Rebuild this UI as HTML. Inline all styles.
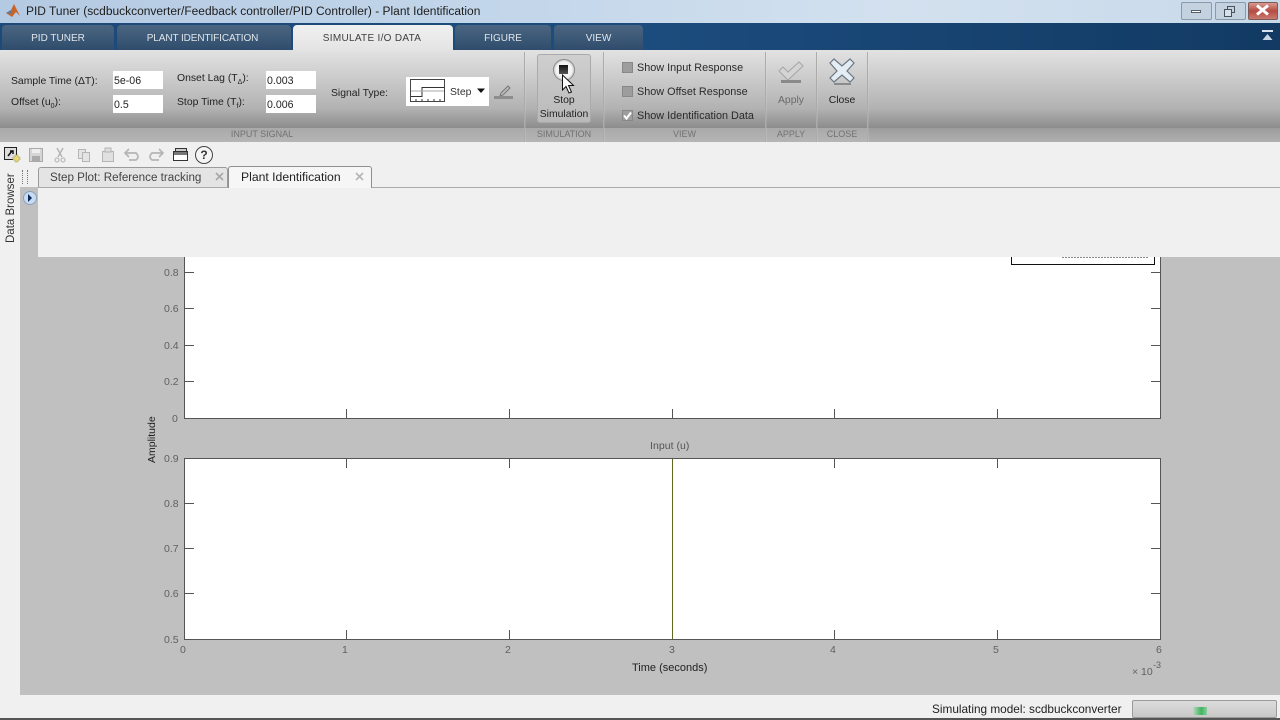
<!DOCTYPE html>
<html><head><meta charset="utf-8">
<style>
html,body{margin:0;padding:0;width:1280px;height:720px;overflow:hidden;background:#f0f0f0;font-family:"Liberation Sans",sans-serif;}
.a{position:absolute;white-space:nowrap;}
#title{left:0;top:0;width:1280px;height:23px;background:linear-gradient(to right,#b4cae2,#c3d6ea 40%,#d3e1ef 70%,#c8d9ea);}
#tabbar{left:0;top:23px;width:1280px;height:27px;background:linear-gradient(to right,#1d4a78,#1c4c7e 50%,#123a63);}
.tab{position:absolute;top:2px;height:25px;background:linear-gradient(#4a6682,#2f4c6c);border-radius:4px 4px 0 0;color:#dfe5ea;font-size:10px;line-height:28px;text-align:center;}
#ribbon{left:0;top:50px;width:1280px;height:78px;background:linear-gradient(#e2e2e2,#cccccc 35%,#b2b2b2 75%,#8c8c8c);}
#strip{left:0;top:128px;width:867px;height:14px;background:linear-gradient(#a9a9a9,#b5b5b5);}
#strip2{left:867px;top:128px;width:413px;height:14px;background:linear-gradient(#9c9c9c,#b0b0b0);}
.lbl{position:absolute;top:128px;height:14px;line-height:13px;font-size:9px;color:#727272;text-align:center;}
.sep{position:absolute;top:52px;width:1px;height:90px;background:#ababab;box-shadow:1px 0 0 rgba(255,255,255,.12);}
.t{position:absolute;font-size:10.4px;color:#222;white-space:nowrap;}
.inp{position:absolute;background:#fff;height:18px;font-size:10.6px;color:#222;line-height:20px;padding-left:1px;width:49px;}
sub{font-size:7px;line-height:0;}
.cb{position:absolute;left:622px;width:9px;height:9px;background:#9d9d9d;border:1px solid #e8e8e8;outline:1px solid #888;outline-offset:-1px;}
.cbl{position:absolute;left:637px;font-size:10.85px;color:#2a2a2a;white-space:nowrap;}
.num{position:absolute;font-size:10.5px;color:#606060;}
</style></head><body>

<div class="a" id="title"></div>
<svg class="a" style="left:5px;top:3px" width="16" height="16" viewBox="0 0 16 16"><path d="M1 10 L6 7 L9 1 L15 13 L11 9 L7 14 Z" fill="#c8642a"/><path d="M1 10 L6 7 L7 11 Z" fill="#5f7d9c"/></svg>
<div class="a" style="left:26px;top:4px;font-size:11.97px;color:#1d1d1d;">PID Tuner (scdbuckconverter/Feedback controller/PID Controller) - Plant Identification</div>

<div class="a" style="left:1181px;top:2px;width:29px;height:16px;background:#c4d2e0;border:1px solid #8b99a8;border-radius:2px;"></div>
<div class="a" style="left:1191px;top:10px;width:10px;height:3px;background:#fff;border:1px solid #58616b;box-sizing:border-box;"></div>
<div class="a" style="left:1215px;top:2px;width:29px;height:16px;background:#c4d2e0;border:1px solid #8b99a8;border-radius:2px;"></div>
<svg class="a" style="left:1222px;top:5px" width="16" height="12"><rect x="5.5" y="1.5" width="7" height="6" fill="none" stroke="#49525c"/><rect x="2.5" y="4.5" width="7" height="7" fill="#d5e0ea" stroke="#49525c"/></svg>
<div class="a" style="left:1248px;top:2px;width:28px;height:16px;background:linear-gradient(#d99a90,#b54b42 50%,#c97a70);border:1px solid #7d5a58;border-radius:2px;"></div>
<svg class="a" style="left:1255px;top:4px" width="15" height="12"><path d="M2 1.5 L13 10.5 M13 1.5 L2 10.5" stroke="#fff" stroke-width="3"/></svg>

<div class="a" id="tabbar">
 <div class="tab" style="left:2px;width:112px;">PID TUNER</div>
 <div class="tab" style="left:117px;width:174px;padding-right:0;letter-spacing:-.1px;text-indent:-3px;">PLANT IDENTIFICATION</div>
 <div class="tab" style="left:293px;width:158px;padding-right:2px;background:linear-gradient(#f0f0f0,#e4e4e4);color:#3f3f3f;letter-spacing:.3px;">SIMULATE I/O DATA</div>
 <div class="tab" style="left:455px;width:96px;">FIGURE</div>
 <div class="tab" style="left:554px;width:89px;">VIEW</div>
</div>
<svg class="a" style="left:1261px;top:29px" width="14" height="13"><rect x="1" y="1" width="11" height="2" fill="#d8e2ec"/><path d="M1.5 11 L6.5 5 L11.5 11Z" fill="#c9d6e2"/></svg>

<div class="a" id="ribbon"></div>
<div class="a" id="strip"></div>
<div class="a" id="strip2"></div>
<div class="sep" style="left:524px"></div>
<div class="sep" style="left:603px"></div>
<div class="sep" style="left:765px"></div>
<div class="sep" style="left:816px"></div>
<div class="sep" style="left:867px"></div>
<div class="lbl" style="left:0;width:524px;">INPUT SIGNAL</div>
<div class="lbl" style="left:525px;width:78px;">SIMULATION</div>
<div class="lbl" style="left:604px;width:161px;">VIEW</div>
<div class="lbl" style="left:766px;width:50px;">APPLY</div>
<div class="lbl" style="left:817px;width:50px;">CLOSE</div>

<div class="t" style="left:11px;top:76px;">Sample Time (&#916;T):</div>
<div class="t" style="left:11px;top:97px;">Offset (u<sub>0</sub>):</div>
<div class="t" style="left:177px;top:73px;">Onset Lag (T<sub>&#916;</sub>):</div>
<div class="t" style="left:177px;top:97px;">Stop Time (T<sub>f</sub>):</div>
<div class="t" style="left:331px;top:88px;">Signal Type:</div>
<div class="inp" style="left:113px;top:71px;">5e-06</div>
<div class="inp" style="left:113px;top:95px;">0.5</div>
<div class="inp" style="left:266px;top:71px;">0.003</div>
<div class="inp" style="left:266px;top:95px;">0.006</div>

<div class="a" style="left:406px;top:77px;width:83px;height:29px;background:#fff;"></div>
<svg class="a" style="left:410px;top:79px" width="36" height="25"><rect x=".5" y=".5" width="34" height="22" fill="#fff" stroke="#444"/><path d="M1 17.5H12V8.5H34" fill="none" stroke="#333"/><path d="M1 12H34" stroke="#aaa"/><path d="M6 22v-2M12 22v-2M18 22v-2M24 22v-2M30 22v-2" stroke="#333"/></svg>
<div class="t" style="left:450px;top:87px;color:#333;">Step</div>
<svg class="a" style="left:477px;top:88px" width="9" height="6"><path d="M0 .5H8L4 5Z" fill="#111"/></svg>
<svg class="a" style="left:492px;top:82px" width="22" height="20"><path d="M9 11 L16 4 L18 6 L11 13 L8 14Z" fill="#bbb" stroke="#777"/><rect x="2" y="14" width="19" height="3" fill="#8d8d8d"/></svg>

<div class="a" style="left:537px;top:54px;width:54px;height:69px;border:1px solid #aaa;border-radius:3px;background:linear-gradient(#cfcfcf,#b9b9b9);box-sizing:border-box;"></div>
<div class="a" style="left:553px;top:59px;width:22px;height:22px;border-radius:50%;background:radial-gradient(#f4f4f4 55%,#8f8f8f);border:1px solid #888;box-sizing:border-box;"></div>
<div class="a" style="left:559px;top:65px;width:9px;height:9px;background:linear-gradient(#111,#555);"></div>
<svg class="a" style="left:561px;top:74px" width="15" height="21"><path d="M1.5 1 V16 L5 12.5 L8 19 L10.5 18 L7.5 11.5 H12.5 Z" fill="#fff" stroke="#111"/></svg>
<div class="t" style="left:537px;top:94px;width:54px;text-align:center;line-height:14px;white-space:normal;color:#222;">Stop Simulation</div>

<div class="cb" style="top:62px;"></div><div class="cbl" style="top:62px;">Show Input Response</div>
<div class="cb" style="top:86px;"></div><div class="cbl" style="top:86px;">Show Offset Response</div>
<div class="cb" style="top:110px;"></div><div class="cbl" style="top:110px;">Show Identification Data</div>
<svg class="a" style="left:622px;top:110px" width="11" height="11"><path d="M2 5.5 L4.5 8.5 L9 2.5" fill="none" stroke="#fff" stroke-width="2"/></svg>

<svg class="a" style="left:776px;top:60px" width="30" height="26"><path d="M3 11 L7 7 L12 12 L23 2 L27 6 L12 20Z" fill="#d4d4d4" stroke="#a6a6a6"/><rect x="5" y="20" width="20" height="3" fill="#8a8a8a"/></svg>
<div class="t" style="left:766px;top:95px;width:50px;text-align:center;color:#6a6a6a;">Apply</div>
<svg class="a" style="left:827px;top:57px" width="30" height="30"><path d="M7 2 L15 9 L23 2 L27 6 L20 14 L27 21 L23 25 L15 18 L7 25 L3 21 L10 14 L3 6Z" fill="#e4edf4" stroke="#6b7883" stroke-width="1.2"/><rect x="7" y="26" width="17" height="2" fill="#8a8a8a"/></svg>
<div class="t" style="left:817px;top:95px;width:50px;text-align:center;">Close</div>

<div class="a" style="left:0;top:142px;width:1280px;height:578px;background:#f0f0f0;"></div>

<!-- toolbar -->
<svg class="a" style="left:2px;top:145px" width="220" height="20">
 <rect x="2.5" y="2.5" width="12" height="12" fill="#ddd" stroke="#222"/><path d="M6 11 L10 6 M8 6H11V9" stroke="#111" fill="none" stroke-width="1.5"/><path d="M13 10h3v2h2v3h-2v2h-3v-2h-2v-3h2z" fill="#e8d878" stroke="#a59a45" stroke-width=".5"/>
 <rect x="27.5" y="3.5" width="13" height="13" fill="#d5d5d5" stroke="#aaa"/><rect x="30" y="4" width="8" height="4" fill="#eee"/><rect x="30" y="11" width="8" height="5" fill="#aaa"/>
 <path d="M55 3 L60 12 M61 3 L56 12" stroke="#b5b5b5" stroke-width="1.5"/><circle cx="55" cy="15" r="2" fill="none" stroke="#b0b0b0"/><circle cx="61" cy="15" r="2" fill="none" stroke="#b0b0b0"/>
 <rect x="76.5" y="4.5" width="7" height="9" fill="#e4e4e4" stroke="#b5b5b5"/><rect x="80.5" y="7.5" width="7" height="9" fill="#e4e4e4" stroke="#b5b5b5"/>
 <rect x="100.5" y="6.5" width="11" height="10" fill="#e0e0e0" stroke="#b5b5b5"/><rect x="103" y="3" width="6" height="4" fill="#ddd" stroke="#b5b5b5"/>
 <path d="M124 8 H134 Q138 12 134 15 H127 M127 4 L123 8 L127 12" fill="none" stroke="#b5b5b5" stroke-width="1.7"/>
 <path d="M160 8 H150 Q146 12 150 15 H157 M157 4 L161 8 L157 12" fill="none" stroke="#b5b5b5" stroke-width="1.7"/>
 <rect x="173.5" y="3.5" width="11" height="5" fill="#ccc" stroke="#333"/><rect x="171.5" y="6.5" width="14" height="9" fill="#fff" stroke="#333"/><rect x="172" y="7" width="13" height="3" fill="#777"/>
</svg>
<div class="a" style="left:195px;top:146px;width:16px;height:16px;border-radius:50%;background:#f4f4f4;border:1.5px solid #444;text-align:center;font-size:12px;line-height:16px;font-weight:bold;color:#333;">?</div>

<!-- document tabs -->
<div class="a" style="left:0;top:166px;width:20px;height:84px;background:#f0f0f0;"></div>
<div class="a" style="left:5px;top:243px;font-size:11.5px;color:#333;transform-origin:0 0;transform:rotate(-90deg);">Data Browser</div>
<div class="a" style="left:20px;top:187px;width:18px;height:508px;background:#c0c0c0;"></div>
<div class="a" style="left:22px;top:170px;width:4px;height:14px;border-left:1px dotted #777;border-right:1px dotted #777;"></div>
<div class="a" style="left:38px;top:187px;width:1242px;height:1px;background:#aaa;"></div>
<div class="a" style="left:38px;top:167px;width:190px;height:20px;background:#e4e4e4;border:1px solid #9a9a9a;border-bottom:none;border-radius:3px 3px 0 0;box-sizing:border-box;"></div>
<div class="a" style="left:50px;top:171px;font-size:11.65px;color:#444;">Step Plot: Reference tracking</div>
<div class="a" style="left:228px;top:166px;width:144px;height:22px;background:#f6f6f6;border:1px solid #8f8f8f;border-bottom:none;border-radius:3px 3px 0 0;box-sizing:border-box;"></div>
<div class="a" style="left:241px;top:170px;font-size:12.2px;color:#222;">Plant Identification</div>
<svg class="a" style="left:214px;top:171px" width="11" height="11"><path d="M2 2 L9 9 M9 2 L2 9" stroke="#a8a8a8" stroke-width="1.6"/></svg>
<svg class="a" style="left:354px;top:171px" width="11" height="11"><path d="M2 2 L9 9 M9 2 L2 9" stroke="#b5b5b5" stroke-width="1.6"/></svg>
<div class="a" style="left:23px;top:191px;width:12px;height:12px;border-radius:50%;background:#c7dcf2;border:1px solid #8aa0b8;"></div>
<svg class="a" style="left:26px;top:194px" width="8" height="8"><path d="M2 0 L6 4 L2 8Z" fill="#0a2a55"/></svg>

<!-- plot region -->
<div class="a" style="left:20px;top:257px;width:1260px;height:438px;background:#c0c0c0;"></div>
<div class="a" style="left:38px;top:188px;width:1242px;height:69px;background:#f0f0f0;"></div>

<svg class="a" style="left:0;top:0" width="1280" height="720">
 <g fill="#fff" stroke="#555" stroke-width="1">
  <path d="M184.5 257 V418.5 H1160.5 V257" />
  <rect x="184.5" y="458.5" width="976" height="181"/>
 </g>
 <path d="M1011.5 257 V264.5 H1154.5 V257" fill="none" stroke="#111" stroke-width="1"/>
 <g stroke="#555" stroke-width="1" fill="none">
  <path d="M346.5 418v-9M509.5 418v-9M672.5 418v-9M834.5 418v-9M997.5 418v-9"/>
  <path d="M1160 272.5h-9M1160 308.5h-9M1160 345.5h-9M1160 381.5h-9"/>
  <path d="M346.5 459v9M509.5 459v9M834.5 459v9M997.5 459v9M672.5 459v9"/>
  <path d="M346.5 639v-9M509.5 639v-9M672.5 639v-9M834.5 639v-9M997.5 639v-9"/>
  <path d="M185 503.5h9M185 548.5h9M185 593.5h9M1160 503.5h-9M1160 548.5h-9M1160 593.5h-9"/>
  <path d="M185 272.5h9M185 308.5h9M185 345.5h9M185 381.5h9"/>
 </g>
 <path d="M672.5 459V639" stroke="#5d6b22" stroke-width="1"/>
 <path d="M1062 257.5h86" stroke="#888" stroke-width="1" stroke-dasharray="2 1"/>
</svg>

<div class="num" style="left:164px;top:267px;">0.8</div>
<div class="num" style="left:164px;top:303px;">0.6</div>
<div class="num" style="left:164px;top:340px;">0.4</div>
<div class="num" style="left:164px;top:376px;">0.2</div>
<div class="num" style="left:172px;top:413px;">0</div>
<div class="num" style="left:164px;top:453px;">0.9</div>
<div class="num" style="left:164px;top:498px;">0.8</div>
<div class="num" style="left:164px;top:543px;">0.7</div>
<div class="num" style="left:164px;top:588px;">0.6</div>
<div class="num" style="left:164px;top:634px;">0.5</div>
<div class="num" style="left:180px;top:644px;">0</div>
<div class="num" style="left:342px;top:644px;">1</div>
<div class="num" style="left:505px;top:644px;">2</div>
<div class="num" style="left:669px;top:644px;">3</div>
<div class="num" style="left:830px;top:644px;">4</div>
<div class="num" style="left:993px;top:644px;">5</div>
<div class="num" style="left:1156px;top:644px;">6</div>
<div class="num" style="left:1132px;top:666px;">&#215; 10</div>
<div class="num" style="left:1153px;top:660px;font-size:9px;">-3</div>
<div class="num" style="left:650px;top:440px;color:#555;letter-spacing:.04px;">Input (u)</div>
<div class="a" style="left:632px;top:662px;font-size:11px;color:#222;">Time (seconds)</div>
<div class="a" style="left:146px;top:463px;font-size:10.5px;color:#222;transform-origin:0 0;transform:rotate(-90deg);">Amplitude</div>

<!-- status bar -->
<div class="a" style="left:0;top:695px;width:1280px;height:23px;background:#f0f0f0;"></div>
<div class="a" style="left:932px;top:702px;font-size:11.8px;color:#222;">Simulating model: scdbuckconverter</div>
<div class="a" style="left:1132px;top:700px;width:145px;height:18px;background:linear-gradient(#dcdcdc,#c8c8c8);border:1px solid #9a9a9a;border-radius:2px;box-sizing:border-box;"></div>
<div class="a" style="left:1193px;top:707px;width:14px;height:8px;background:linear-gradient(to right,#b6d8bc,#3fb45f 60%,#8ccc9c);"></div>
<div class="a" style="left:0;top:718px;width:1280px;height:2px;background:#555;"></div>
</body></html>
